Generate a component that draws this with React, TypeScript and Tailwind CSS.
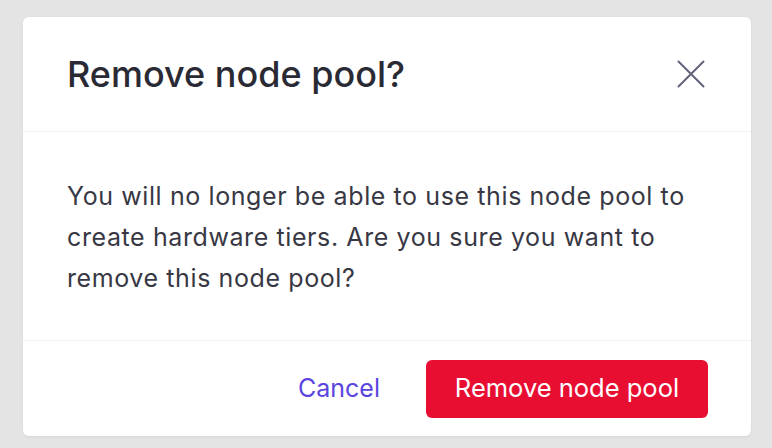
export default function App() {
  return (
    <div className="h-[448px] w-[772px] bg-[#e4e4e4] pt-[17px] pl-[23px] font-['Inter',sans-serif]">
      <div className="flex h-[419px] w-[728px] flex-col rounded-[6px] bg-white shadow-[0_1px_3px_rgba(0,0,0,0.06)]">
        <div className="flex h-[115px] items-center justify-between border-b border-[#f1f1f3] pl-[44px] pr-[46px]">
          <h2 className="whitespace-nowrap text-[36px] font-medium leading-none text-[#2a2a35]">Remove node pool?</h2>
          <button className="text-[#62627a]">
            <svg width="28" height="28" viewBox="0 0 28 28" fill="none" stroke="currentColor" strokeWidth="2" strokeLinecap="round">
              <path d="M1.5 1.5 L26.5 26.5 M26.5 1.5 L1.5 26.5" />
            </svg>
          </button>
        </div>
        <div className="flex-1 px-[44px] pt-[44px] text-[25px] leading-[41px] tracking-[0.6px] text-[#383844]">
          You will no longer be able to use this node pool to create hardware tiers. Are you sure you want to remove this
          node pool?
        </div>
        <div className="flex h-[96px] items-center justify-end gap-[46px] border-t border-[#f1f1f3] pr-[43px]">
          <button className="text-[25px] text-[#5b45e0]">Cancel</button>
          <button className="flex h-[58px] w-[282px] items-center justify-center rounded-[6px] bg-[#e80e32] text-[25.5px] text-white">
            Remove node pool
          </button>
        </div>
      </div>
    </div>
  );
}
